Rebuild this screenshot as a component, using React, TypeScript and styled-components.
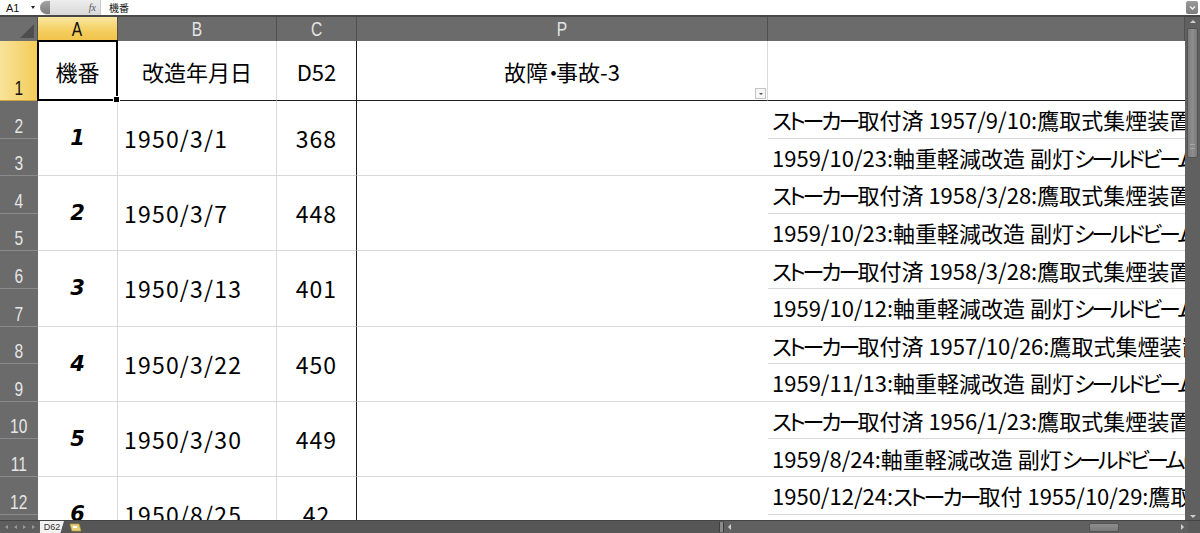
import React from 'react';
import styled, { createGlobalStyle, css } from 'styled-components';

const GlobalStyle = createGlobalStyle`
  html, body { margin: 0; padding: 0; background: #ffffff; }
  body { font-family: "Noto Sans CJK JP", "Noto Sans", sans-serif; }
  #root { width: 1200px; height: 533px; overflow: hidden; }
`;

const JP = `"Noto Sans CJK JP", "Noto Sans", sans-serif`;
const NARROW = `"Liberation Sans", sans-serif`;

type Rec = { no: string; date: string; d52: string; a: string; b: string };

const records: Rec[] = [
  { no: '1', date: '1950/3/1', d52: '368', a: 'ストーカー取付済 1957/9/10:鷹取式集煙装置⇨', b: '1959/10/23:軸重軽減改造 副灯シールドビーム(LP405)取付' },
  { no: '2', date: '1950/3/7', d52: '448', a: 'ストーカー取付済 1958/3/28:鷹取式集煙装置⇨', b: '1959/10/23:軸重軽減改造 副灯シールドビーム(LP405)取付' },
  { no: '3', date: '1950/3/13', d52: '401', a: 'ストーカー取付済 1958/3/28:鷹取式集煙装置⇨', b: '1959/10/12:軸重軽減改造 副灯シールドビーム(LP405)取付' },
  { no: '4', date: '1950/3/22', d52: '450', a: 'ストーカー取付済 1957/10/26:鷹取式集煙装置⇨', b: '1959/11/13:軸重軽減改造 副灯シールドビーム(LP405)取付' },
  { no: '5', date: '1950/3/30', d52: '449', a: 'ストーカー取付済 1956/1/23:鷹取式集煙装置⇨', b: '1959/8/24:軸重軽減改造 副灯シールドビーム(LP405)取付' },
  { no: '6', date: '1950/8/25', d52: '42', a: '1950/12/24:ストーカー取付 1955/10/29:鷹取式集煙装置', b: '1960/3/2:軸重軽減改造 副灯シールドビーム(LP405)取付' },
];

const columns = [
  { key: 'A', active: true },
  { key: 'B', active: false },
  { key: 'C', active: false },
  { key: 'P', active: false },
  { key: '', active: false },
];

/* ---------- text runs (Meiryo UI-like proportions) ---------- */

const Line = styled.span`
  white-space: pre;
`;

const Kana = styled.span`
  font-feature-settings: "palt";
  letter-spacing: -3px;
`;

const Latin = styled.span`
  letter-spacing: 0;
`;

const KANA_OR_LATIN = /([\u30A0-\u30FF]+|[\x20-\x7E]+)/g;

function Rich({ text }: { text: string }) {
  return (
    <Line>
      {text
        .split(KANA_OR_LATIN)
        .filter(Boolean)
        .map((seg, i) =>
          /^[\u30A0-\u30FF]+$/.test(seg) ? (
            <Kana key={i}>{seg}</Kana>
          ) : /^[\x20-\x7E]+$/.test(seg) ? (
            <Latin key={i}>{seg}</Latin>
          ) : (
            <React.Fragment key={i}>{seg}</React.Fragment>
          )
        )}
    </Line>
  );
}

/* ---------- window ---------- */

const Window = styled.div`
  width: 1200px;
  height: 533px;
  display: flex;
  flex-direction: column;
  overflow: hidden;
  background: #5a5a5a;
`;

/* ---------- formula bar ---------- */

const FormulaBar = styled.div`
  height: 17px;
  box-sizing: border-box;
  border-bottom: 2px solid #474747;
  display: flex;
  align-items: stretch;
  background: #ffffff;
  font-family: ${JP};
  font-size: 10px;
  color: #111;
`;

const NameBox = styled.div`
  width: 40px;
  display: flex;
  align-items: center;
  justify-content: space-between;
  padding: 0 5px 0 6px;
  box-sizing: border-box;
  font-family: "Liberation Sans", sans-serif;
  font-size: 11px;
`;

const TinyDown = styled.span`
  width: 0;
  height: 0;
  border-left: 2.5px solid transparent;
  border-right: 2.5px solid transparent;
  border-top: 3px solid #222;
`;

const FxArea = styled.div`
  width: 60px;
  display: flex;
  align-items: center;
  justify-content: space-between;
  padding-right: 4px;
  box-sizing: border-box;
  border-radius: 8px 0 0 8px;
  background: linear-gradient(#ededed, #d9d9d9);
`;

const FxCap = styled.span`
  width: 10px;
  height: 13px;
  border-radius: 7px 0 0 7px;
  background: linear-gradient(#a3a3a3, #7d7d7d);
`;

const FxLabel = styled.span`
  font-family: "Liberation Serif", serif;
  font-style: italic;
  font-size: 10px;
  color: #555;
`;

const FormulaInput = styled.div`
  flex: 1;
  display: flex;
  align-items: center;
  padding-left: 8px;
  border-left: 1px solid #c8c8c8;
  font-size: 10px;
`;

const FormulaDrop = styled.div`
  width: 12px;
  margin: 1px 2px 1px 0;
  border-radius: 2px;
  background: linear-gradient(#9a9a9a, #7c7c7c);
  display: flex;
  align-items: center;
  justify-content: center;
`;

/* ---------- main area ---------- */

const Main = styled.div`
  flex: 1;
  min-height: 0;
  display: flex;
`;

const Sheet = styled.div`
  flex: 1;
  min-width: 0;
  overflow: hidden;
  display: grid;
  grid-template-columns: 38px 80px 159px 80px 411px 1fr;
  grid-template-rows: 24px 60px repeat(12, 37.6px);
  background: #ffffff;
`;

const Corner = styled.div`
  grid-row: 1;
  grid-column: 1;
  background: #6e6e6e;
  border-right: 1px solid #505050;
  display: flex;
  align-items: flex-end;
  justify-content: flex-end;
  padding: 0 3px 3px 0;
`;

const HeadLabel = styled.span`
  display: inline-block;
  transform: scaleX(0.74);
`;

const ColHead = styled.div<{ $active: boolean }>`
  grid-row: 1;
  display: flex;
  align-items: center;
  justify-content: center;
  border-right: 1px solid #505050;
  font-family: ${NARROW};
  font-size: 21px;
  ${p =>
    p.$active
      ? css`
          background: linear-gradient(#f9e7a1, #f4cd5c 60%, #f1c24a);
          color: #111;
        `
      : css`
          background: #6b6b6b;
          color: #e4e4e4;
        `}
`;

const RowHead = styled.div<{ $active: boolean; $r: number }>`
  grid-row: ${p => p.$r};
  grid-column: 1;
  display: flex;
  align-items: flex-end;
  justify-content: center;
  padding-bottom: 2px;
  box-sizing: border-box;
  font-family: ${NARROW};
  font-size: 21px;
  line-height: 20px;
  ${p =>
    p.$active
      ? css`
          background: linear-gradient(90deg, #f9e39a, #f3cb57);
          color: #111;
          border-bottom: 1px solid #c9a441;
        `
      : css`
          background: #6b6b6b;
          color: #e6e6e6;
          border-bottom: 1px solid #8a8a8a;
        `}
`;

const GridCell = styled.div<{ $r: number; $rs?: number; $c: number }>`
  grid-row: ${p => p.$r} / span ${p => p.$rs ?? 1};
  grid-column: ${p => p.$c};
  min-width: 0;
  overflow: hidden;
  white-space: nowrap;
  display: flex;
  align-items: center;
  box-sizing: border-box;
  font-family: ${JP};
  font-size: 22px;
  color: #000;
  border-right: 1px solid #d9d9d9;
  border-bottom: 1px solid #d9d9d9;
`;

const TitleCell = styled(GridCell)<{ $edge?: boolean; $last?: boolean }>`
  justify-content: center;
  border-bottom: 1px solid #1e1e1e;
  position: relative;
  overflow: visible;
  ${p => p.$edge && css`border-right: 1px solid #1e1e1e;`}
  ${p => p.$last && css`border-right: none;`}
`;

const Selection = styled.span`
  position: absolute;
  left: -1px;
  top: -1px;
  right: -1px;
  bottom: -1px;
  border: 2px solid #000;
  pointer-events: none;
  z-index: 2;
  &::after {
    content: '';
    position: absolute;
    right: -4px;
    bottom: -4px;
    width: 5px;
    height: 5px;
    background: #000;
    border: 1px solid #fff;
  }
`;

const FilterButton = styled.span`
  position: absolute;
  right: 1px;
  bottom: 1px;
  width: 9px;
  height: 9px;
  border: 1px solid #c4c4c4;
  background: #f6f6f6;
  display: flex;
  align-items: center;
  justify-content: center;
  &::before {
    content: '';
    border-left: 2px solid transparent;
    border-right: 2px solid transparent;
    border-top: 2px solid #555;
  }
`;

const IdCell = styled(GridCell)`
  justify-content: center;
  font-family: "DejaVu Sans", sans-serif;
  font-weight: 700;
  font-style: italic;
  font-size: 21px;
`;

const DateCell = styled(GridCell)`
  padding-left: 6px;
  font-size: 23px;
  letter-spacing: 1.2px;
`;

const NumCell = styled(GridCell)`
  justify-content: center;
  border-right: 1px solid #1e1e1e;
  font-size: 23px;
  letter-spacing: 1px;
`;

const BlankCell = styled(GridCell)`
  border-right: none;
`;

const NoteCell = styled(GridCell)`
  border-right: none;
  padding-left: 4px;
  overflow: hidden;
`;

/* ---------- vertical scrollbar ---------- */

const VScroll = styled.div`
  width: 15px;
  background: #606060;
  display: flex;
  flex-direction: column;
  align-items: center;
  padding: 3px 0 2px;
  box-sizing: border-box;
  gap: 3px;
`;

const Arrow = styled.span<{ $dir: 'up' | 'down' | 'left' | 'right' }>`
  width: 0;
  height: 0;
  flex: none;
  ${p =>
    p.$dir === 'up'
      ? css`border-left: 3px solid transparent; border-right: 3px solid transparent; border-bottom: 3px solid #cfcfcf;`
      : p.$dir === 'down'
      ? css`border-left: 3px solid transparent; border-right: 3px solid transparent; border-top: 3px solid #cfcfcf;`
      : p.$dir === 'left'
      ? css`border-top: 3px solid transparent; border-bottom: 3px solid transparent; border-right: 3px solid #cfcfcf;`
      : css`border-top: 3px solid transparent; border-bottom: 3px solid transparent; border-left: 3px solid #cfcfcf;`}
`;

const VThumb = styled.div`
  width: 11px;
  height: 130px;
  margin-top: 2px;
  border-radius: 2px;
  background: linear-gradient(90deg, #7c7c7c, #8e8e8e 50%, #7a7a7a);
  border: 1px solid #545454;
  box-sizing: border-box;
  display: flex;
  align-items: flex-end;
  justify-content: center;
  padding-bottom: 8px;
`;

const Grip = styled.span`
  width: 5px;
  height: 3px;
  border-top: 1px solid #a5a5a5;
  border-bottom: 1px solid #a5a5a5;
`;

const VSpacer = styled.div`
  flex: 1;
`;

/* ---------- bottom bar ---------- */

const TabBar = styled.div`
  height: 13px;
  display: flex;
  align-items: stretch;
  background: #565656;
  border-top: 1px solid #444;
  box-sizing: border-box;
`;

const NavButtons = styled.div`
  width: 40px;
  display: flex;
  align-items: center;
  justify-content: space-around;
  padding: 0 2px;
  box-sizing: border-box;
  background: #5e5e5e;
`;

const NavArrow = styled.span<{ $right?: boolean }>`
  width: 0;
  height: 0;
  border-top: 2px solid transparent;
  border-bottom: 2px solid transparent;
  ${p => (p.$right ? css`border-left: 3px solid #9a9a9a;` : css`border-right: 3px solid #9a9a9a;`)}
`;

const SheetTab = styled.div`
  width: 24px;
  display: flex;
  align-items: center;
  justify-content: center;
  background: #f2f2f2;
  color: #333;
  font-family: "Liberation Sans", sans-serif;
  font-size: 9px;
  clip-path: polygon(0 0, 100% 0, 85% 100%, 0 100%);
`;

const NewSheet = styled.div`
  width: 22px;
  display: flex;
  align-items: center;
  justify-content: center;
`;

const TabSpace = styled.div`
  width: 633px;
`;

const Splitter = styled.div`
  width: 3px;
  margin: 1px 0;
  background: #8a8a8a;
  border-left: 1px solid #3c3c3c;
  border-right: 1px solid #3c3c3c;
`;

const HScroll = styled.div`
  flex: 1;
  display: flex;
  align-items: center;
  padding: 0 4px 0 4px;
  gap: 4px;
  background: #606060;
`;

const HTrack = styled.div`
  flex: 1;
  height: 100%;
  display: flex;
  align-items: center;
  justify-content: flex-end;
  padding-right: 58px;
`;

const HThumb = styled.div`
  width: 30px;
  height: 9px;
  border-radius: 2px;
  border: 1px solid #545454;
  background: linear-gradient(#8e8e8e, #7a7a7a);
  box-sizing: border-box;
`;

const CornerBox = styled.div`
  width: 12px;
  background: #5a5a5a;
`;

export default function App() {
  return (
    <>
      <GlobalStyle />
      <Window>
        <FormulaBar>
          <NameBox>
            A1
            <TinyDown />
          </NameBox>
          <FxArea>
            <FxCap />
            <FxLabel>fx</FxLabel>
          </FxArea>
          <FormulaInput>機番</FormulaInput>
          <FormulaDrop>
            <svg width="7" height="6" viewBox="0 0 7 6">
              <path d="M1 1.5 L3.5 4 L6 1.5" fill="none" stroke="#f4f4f4" strokeWidth="1.4" />
            </svg>
          </FormulaDrop>
        </FormulaBar>

        <Main>
          <Sheet>
            <Corner>
              <svg width="14" height="14" viewBox="0 0 14 14">
                <polygon points="14,0 14,14 0,14" fill="#4e4e4e" />
              </svg>
            </Corner>
            {columns.map(c => (
              <ColHead key={c.key || 'q'} $active={c.active}>
                <HeadLabel>{c.key}</HeadLabel>
              </ColHead>
            ))}

            {Array.from({ length: 13 }, (_, i) => (
              <RowHead key={i} $r={i + 2} $active={i === 0}>
                <HeadLabel>{i + 1}</HeadLabel>
              </RowHead>
            ))}

            <TitleCell $r={2} $c={2}>
              機番
              <Selection />
            </TitleCell>
            <TitleCell $r={2} $c={3}>改造年月日</TitleCell>
            <TitleCell $r={2} $c={4} $edge>
              D52
            </TitleCell>
            <TitleCell $r={2} $c={5}>
              <Rich text="故障・事故-3" />
              <FilterButton />
            </TitleCell>
            <TitleCell $r={2} $c={6} $last />

            {records.map((rec, i) => {
              const r = 3 + i * 2;
              return (
                <React.Fragment key={rec.no}>
                  <IdCell $r={r} $rs={2} $c={2}>{rec.no}</IdCell>
                  <DateCell $r={r} $rs={2} $c={3}>{rec.date}</DateCell>
                  <NumCell $r={r} $rs={2} $c={4}>{rec.d52}</NumCell>
                  <BlankCell $r={r} $rs={2} $c={5} />
                  <NoteCell $r={r} $c={6}>
                    <Rich text={rec.a} />
                  </NoteCell>
                  <NoteCell $r={r + 1} $c={6}>
                    <Rich text={rec.b} />
                  </NoteCell>
                </React.Fragment>
              );
            })}
          </Sheet>

          <VScroll>
            <Arrow $dir="up" />
            <VThumb>
              <Grip />
            </VThumb>
            <VSpacer />
            <Arrow $dir="down" />
          </VScroll>
        </Main>

        <TabBar>
          <NavButtons>
            <NavArrow />
            <NavArrow />
            <NavArrow $right />
            <NavArrow $right />
          </NavButtons>
          <SheetTab>D62</SheetTab>
          <NewSheet>
            <svg width="14" height="9" viewBox="0 0 14 9">
              <polygon points="2,1 11,1 13,8 4,8" fill="#e9d27e" stroke="#b89a3c" strokeWidth="0.8" />
              <rect x="5" y="3" width="4" height="2" fill="#fff" />
            </svg>
          </NewSheet>
          <TabSpace />
          <Splitter />
          <HScroll>
            <Arrow $dir="left" />
            <HTrack>
              <HThumb />
            </HTrack>
            <Arrow $dir="right" />
          </HScroll>
          <CornerBox />
        </TabBar>
      </Window>
    </>
  );
}
